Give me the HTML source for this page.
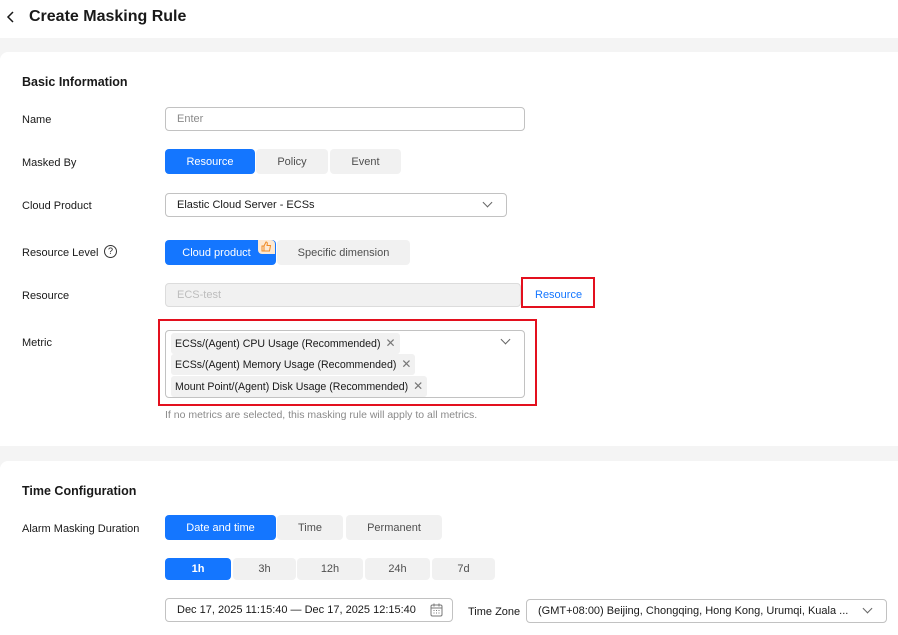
<!DOCTYPE html>
<html><head><meta charset="utf-8"><style>
*{box-sizing:border-box;margin:0;padding:0}
body{width:898px;height:635px;overflow:hidden;background:#f4f4f4;font-family:"Liberation Sans",Arial,sans-serif;font-size:11px;color:#191919;position:relative}
.a{position:absolute}
.hdr{left:0;top:0;width:898px;height:38px;background:#fff}
.card{left:0;width:898px;background:#fff;border-radius:8px 0 0 0}
.lbl{font-size:11px;color:#191919;line-height:14px}
.h{font-size:12.5px;font-weight:bold;color:#191919}
.btn{height:25px;line-height:26px;text-align:center;background:#f1f1f1;color:#4f4f4f;border-radius:4px;font-size:11px}
.on{background:#1476ff;color:#fff}
.inp{border:1px solid #c2c2c2;border-radius:4px;background:#fff;height:24px;line-height:23px;padding-left:11px;font-size:11px}
.tag{height:21px;line-height:21px;background:#f1f1f1;border-radius:3px;padding:0 4px 0 4px;font-size:10.6px;color:#191919;white-space:nowrap}
.x{display:inline-block;margin-left:5px;color:#777;font-size:12px;font-weight:300}
.chev{width:7px;height:7px;border-right:1px solid #666;border-bottom:1px solid #666;transform:rotate(45deg)}
.red{border:2px solid #e3101e}
</style></head><body>
<div class="a hdr"></div>
<svg class="a" style="left:6px;top:10px" width="10" height="14"><path d="M7 2 L2 7 L7 12" fill="none" stroke="#191919" stroke-width="1.5"/></svg>
<div class="a" style="left:29px;top:8px;font-size:16px;font-weight:bold">Create Masking Rule</div>

<div class="a card" style="top:52px;height:394px"></div>
<div class="a card" style="top:461px;height:174px"></div>

<div class="a h" style="left:22px;top:75px">Basic Information</div>
<div class="a lbl" style="left:22px;top:113px">Name</div>
<div class="a inp" style="left:165px;top:107px;width:360px;color:#8a8a8a">Enter</div>

<div class="a lbl" style="left:22px;top:156px">Masked By</div>
<div class="a btn on" style="left:165px;top:149px;width:90px">Resource</div>
<div class="a btn" style="left:256px;top:149px;width:72px">Policy</div>
<div class="a btn" style="left:330px;top:149px;width:71px">Event</div>

<div class="a lbl" style="left:22px;top:199px">Cloud Product</div>
<div class="a inp" style="left:165px;top:193px;width:342px;color:#191919">Elastic Cloud Server - ECSs</div>
<div class="a chev" style="left:484px;top:199px"></div>

<div class="a lbl" style="left:22px;top:246px">Resource Level</div>
<div class="a" style="left:104px;top:245px;width:13px;height:13px;border:1px solid #333;border-radius:50%;font-size:9px;line-height:11px;text-align:center">?</div>
<div class="a btn on" style="left:165px;top:240px;width:111px;padding-right:8px">Cloud product</div>
<div class="a" style="left:258px;top:240px;width:17px;height:14px;background:#fde9d3;border-radius:0 4px 0 4px"></div>
<svg class="a" style="left:260px;top:240px" width="13" height="13" viewBox="0 0 13 13"><path d="M2 6h2v5H2z M4 6 L6 2 Q7.5 2 7.3 4 L7 5.5 H10.5 L9.5 11 H4" fill="none" stroke="#f08a24" stroke-width="1"/></svg>
<div class="a btn" style="left:277px;top:240px;width:133px">Specific dimension</div>

<div class="a lbl" style="left:22px;top:289px">Resource</div>
<div class="a inp" style="left:165px;top:283px;width:356px;background:#f1f1f1;border-color:#dcdcdc;color:#bdbdbd">ECS-test</div>
<div class="a red" style="left:521px;top:277px;width:74px;height:31px;background:#fff"></div>
<div class="a" style="left:535px;top:289px;color:#1476ff;font-size:11px">Resource</div>

<div class="a lbl" style="left:22px;top:336px">Metric</div>
<div class="a red" style="left:158px;top:319px;width:379px;height:87px"></div>
<div class="a inp" style="left:165px;top:330px;width:360px;height:68px;padding:0"></div>
<div class="a chev" style="left:502px;top:336px"></div>
<div class="a tag" style="left:171px;top:333px">ECSs/(Agent) CPU Usage (Recommended)<span class="x">✕</span></div>
<div class="a tag" style="left:171px;top:354px">ECSs/(Agent) Memory Usage (Recommended)<span class="x">✕</span></div>
<div class="a tag" style="left:171px;top:376px">Mount Point/(Agent) Disk Usage (Recommended)<span class="x">✕</span></div>
<div class="a" style="left:165px;top:409px;color:#8a8a8a;font-size:10.5px">If no metrics are selected, this masking rule will apply to all metrics.</div>

<div class="a h" style="left:22px;top:484px">Time Configuration</div>
<div class="a lbl" style="left:22px;top:522px">Alarm Masking Duration</div>
<div class="a btn on" style="left:165px;top:515px;width:111px">Date and time</div>
<div class="a btn" style="left:277px;top:515px;width:66px">Time</div>
<div class="a btn" style="left:346px;top:515px;width:96px">Permanent</div>

<div class="a btn on" style="left:165px;top:558px;width:66px;height:22px;line-height:22px;font-weight:bold">1h</div>
<div class="a btn" style="left:233px;top:558px;width:63px;height:22px;line-height:22px">3h</div>
<div class="a btn" style="left:297px;top:558px;width:66px;height:22px;line-height:22px">12h</div>
<div class="a btn" style="left:365px;top:558px;width:65px;height:22px;line-height:22px">24h</div>
<div class="a btn" style="left:432px;top:558px;width:63px;height:22px;line-height:22px">7d</div>

<div class="a inp" style="left:165px;top:598px;width:288px;color:#191919">Dec 17, 2025 11:15:40 — Dec 17, 2025 12:15:40</div>
<svg class="a" style="left:430px;top:603px" width="13" height="14"><rect x="1" y="2" width="11" height="11" rx="1.5" fill="none" stroke="#777"/><path d="M1 5h11M4 0.5v3M9 0.5v3" stroke="#777"/><path d="M3.5 7.5h1M6 7.5h1M8.5 7.5h1M3.5 10h1M6 10h1M8.5 10h1" stroke="#777"/></svg>
<div class="a lbl" style="left:468px;top:605px">Time Zone</div>
<div class="a inp" style="left:526px;top:599px;width:361px;color:#191919">(GMT+08:00) Beijing, Chongqing, Hong Kong, Urumqi, Kuala ...</div>
<div class="a chev" style="left:864px;top:605px"></div>
</body></html>
